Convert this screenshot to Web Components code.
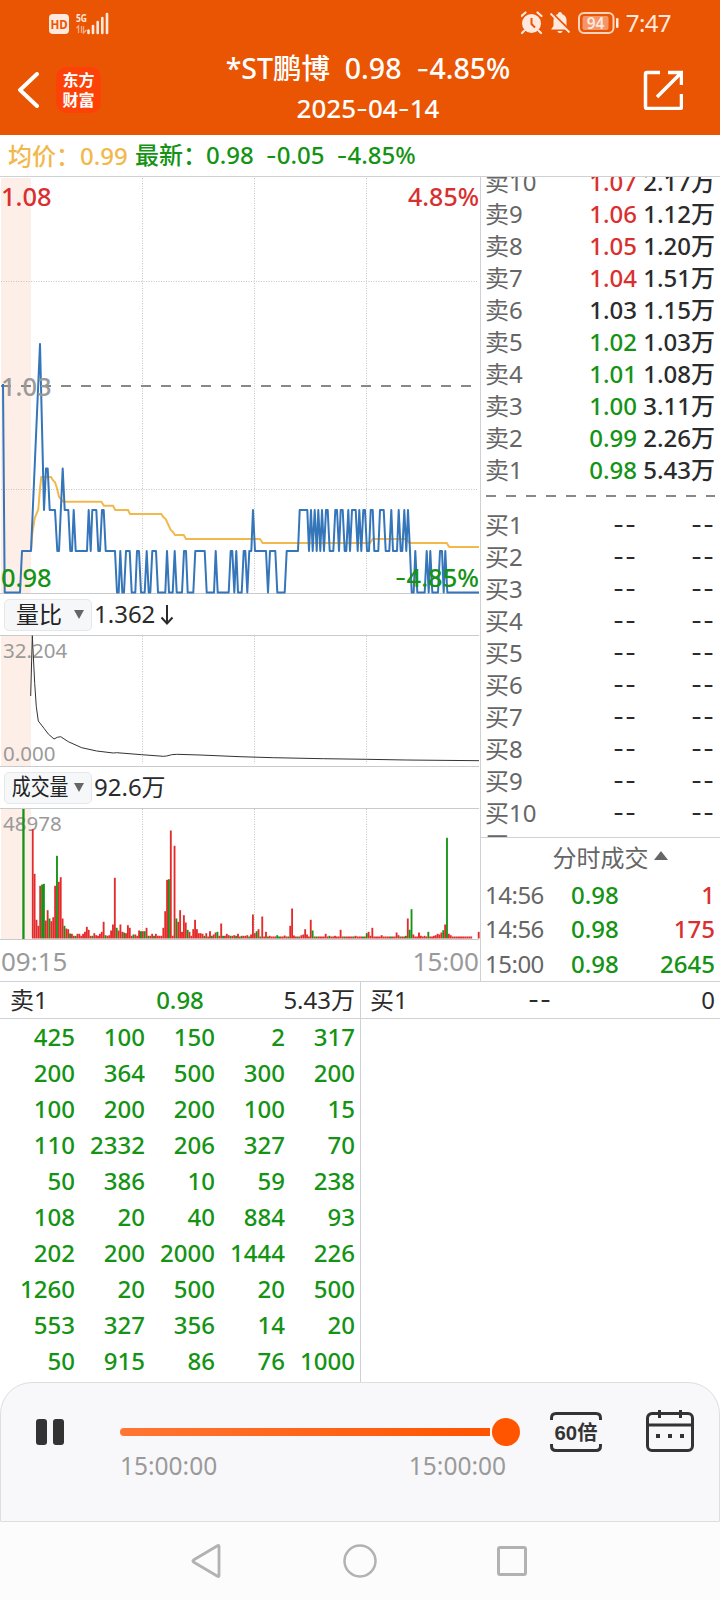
<!DOCTYPE html>
<html lang="zh-CN">
<head>
<meta charset="utf-8">
<title>*ST鹏博 分时回放</title>
<style>
  body {
    margin: 0;
    width: 720px;
    height: 1600px;
    overflow: hidden;
    background: #fff;
    color: #2b2b2b;
    font: 24px/32px "Noto Sans", "Noto Sans CJK SC", sans-serif;
    --up: #d9302f;
    --down: #149314;
    --avg: #f2b84c;
    --line: #cfd1d4;
    --muted: #9a9a9a;
    --label: #666;
  }
  main { display: flex; height: 804px; }
  .charts { width: 480px; display: flex; flex-direction: column; border-right: 1px solid var(--line); }
  .side { flex: 1; min-width: 0; display: flex; flex-direction: column; }
  .queues { display: flex; height: 400px; border-top: 1px solid var(--line); }
</style>
</head>
<body>
  <app-header name="*ST鹏博" price="0.98" change="-4.85%" date="2025-04-14"></app-header>
  <quote-strip></quote-strip>
  <main>
    <div class="charts">
      <price-chart></price-chart>
      <indicator-row wide>量比<span slot="value">1.362<svg width="14" height="22" viewBox="0 0 14 22" style="margin-left:5px;vertical-align:-3px"><path d="M7 1v18M1.500 13.500 7 19.500l5.500-6" fill="none" stroke="#2b2b2b" stroke-width="2"/></svg></span></indicator-row>
      <ratio-chart></ratio-chart>
      <indicator-row>成交量<span slot="value">92.6万</span></indicator-row>
      <volume-chart></volume-chart>
      <time-axis><span>09:15</span><span>15:00</span></time-axis>
    </div>
    <div class="side">
      <order-book></order-book>
      <trade-list></trade-list>
    </div>
  </main>
  <div class="queues">
    <order-queue side="卖1" price="0.98" total="5.43万"></order-queue>
    <order-queue side="买1" price="--" total="0"></order-queue>
  </div>
  <replay-bar from="15:00:00" to="15:00:00" speed="60倍"></replay-bar>
  <system-nav></system-nav>

<script>
// Small base: every element renders once from its html getter.
class BaseElement extends HTMLElement {
  constructor() {
    super();
    this.attachShadow({ mode: "open" });
  }

  connectedCallback() {
    const template = document.createElement("template");
    template.innerHTML = this.html;
    this.shadowRoot.replaceChildren(template.content.cloneNode(true));
  }
}

// Noto's hyphen is too short for a minus sign, Inter's is wide enough.
const wideDash = (text) => text.replace(/-/g, `<span style="font-family:Inter,sans-serif;font-weight:400">-</span>`);

const GRID_X = [142.5, 254.5, 366.5];

function gridLines(height) {
  return GRID_X.map((x) => `<path class="grid" d="M${x} 1V${height - 3}"/>`).join("");
}

const chartStyle = `
  :host { display: block; width: 480px; flex: none; }
  svg { display: block; }
  .pre { fill: #fdeee8; }
  .grid { stroke: #c4c4c4; stroke-width: 1; stroke-dasharray: 1 1.5; fill: none; }
  .edge { stroke: #c9cacc; stroke-width: 1; }
  text { fill: var(--muted); }
`;

class AppHeader extends BaseElement {
  get html() {
    const attr = (n) => this.getAttribute(n);
    return `
      <style>
        :host { display: flex; flex-direction: column; height: 135px; background: #ea5504; color: #fff; }
        .status { display: flex; align-items: center; height: 46px; padding: 0 49px; color: #ffe9df; }
        .status svg { flex: none; margin-top: -1px; }
        .clock { margin-left: 7px; font: 24px/30px "Noto Sans", sans-serif; letter-spacing: -.6px; }
        .bar { display: flex; align-items: flex-start; height: 89px; }
        .back { margin: 26px 0 0 17px; }
        .logo { margin: 21px 0 0 17px; width: 45px; height: 46px; box-sizing: border-box; padding-top: 2px;
          border-radius: 10px; background: #fd4208; text-align: center;
          font: 700 16px/20px "Noto Sans CJK SC", sans-serif; }
        .title { width: 534px; display: flex; flex-direction: column; align-items: center; }
        .title b { flex: none; font-weight: 500; font-size: 28.500px; line-height: 44px; white-space: pre; }
        .date { font-weight: 500; font-size: 26px; line-height: 34px; }
        .share { margin: 24px 0 0 8px; }
      </style>
      <div class="status">
        <svg width="60" height="24" viewBox="0 0 60 24">
          <rect y="3" width="20" height="20" rx="4" fill="#ffe9df"/>
          <text x="10" y="17.500" font-size="11.500" font-weight="700" text-anchor="middle" fill="#ea5504" font-family="Noto Sans">HD</text>
          <text x="27" y="11" font-size="11" font-weight="700" fill="#ffe9df" font-family="Noto Sans" textLength="11" lengthAdjust="spacingAndGlyphs">5G</text>
          <path d="M27.500 17l2-2v7M32.500 15v7M34.500 15v7l3-3" fill="none" stroke="#f7ab85" stroke-width="1.300"/>
          <path d="M39.500 19.500V22M44 15v7M48.700 11v11M53.300 7v15M58 3v19" stroke="#ffe9df" stroke-width="2.600" stroke-linecap="round"/>
        </svg>
        <svg style="margin-left:auto" width="98" height="24" viewBox="0 0 98 24">
          <g fill="#ffe9df">
            <circle cx="10.500" cy="12.500" r="9.500"/>
            <path d="M3 20l-2 2M18 20l2 2M.5 5 4.500 1.500M20.500 5l-4-3.500" stroke="#ffe9df" stroke-width="2.200" stroke-linecap="round"/>
            <path d="M10.500 7v6l3.500 3.500" fill="none" stroke="#ea5504" stroke-width="2"/>
            <path d="M39 1c1.200 0 2 .8 2 2 3 1 4.500 3.500 4.500 6.500V15l2.500 3.500H30L32.500 15V9.500C32.500 6 34.500 3.800 37 3c0-1.200.8-2 2-2zM36.500 20h5c-.3 1.500-1.300 2-2.500 2s-2.200-.5-2.500-2z"/>
            <path d="M31 2.500 50 21" stroke="#ea5504" stroke-width="3"/>
            <path d="M29.500 2.500 48.500 21.500" stroke="#ffe9df" stroke-width="1.800"/>
            <rect x="58" y="2" width="34.500" height="20" rx="5" fill="none" stroke="#ffd3be" stroke-width="2"/>
            <rect x="61.500" y="5" width="26" height="14" rx="2" fill="#f49668"/>
            <rect x="95" y="7" width="2.500" height="10" rx="1"/>
            <text x="74.500" y="17.500" font-size="15.500" font-weight="600" text-anchor="middle" font-family="Noto Sans">94</text>
          </g>
        </svg>
        <span class="clock">7:47</span>
      </div>
      <div class="bar">
        <svg class="back" width="22" height="36" viewBox="0 0 22 36"><path d="M20 2 3 18l17 16" fill="none" stroke="#fff" stroke-width="4" stroke-linecap="round" stroke-linejoin="round"/></svg>
        <div class="logo">东方<br>财富</div>
        <div class="title"><b>${wideDash(`${attr("name")}  ${attr("price")}  ${attr("change")}`)}</b><div class="date">${wideDash(attr("date"))}</div></div>
        <svg class="share" width="40" height="40" viewBox="0 0 40 40"><path d="M17 2.500H4q-1.500 0-1.500 1.500v33q0 1.500 1.500 1.500h33q1.500 0 1.500-1.500V24M25 2.500h13.500V15M38 3 14 27" fill="none" stroke="#fff" stroke-width="3.500"/></svg>
      </div>`;
  }
}

class QuoteStrip extends BaseElement {
  get html() {
    return `
      <style>
        :host { display: flex; align-items: center; height: 41px; padding-left: 8px; border-bottom: 1px solid var(--line);
          color: var(--down); white-space: pre; font-weight: 500; }
        .avg { width: 127px; color: var(--avg); }
        .avg, .last { display: flex; }
        .k { width: 72px; }
        .last .k { width: 71px; }
        .delta { margin-left: 12px; }
      </style>
      <div class="avg"><span class="k">均价：</span>0.99</div>
      <div class="last"><span class="k">最新：</span>0.98<span class="delta">${wideDash("-0.05")}</span><span class="delta">${wideDash("-4.85%")}</span></div>`;
  }
}

// Pixel heights of the price levels 0.98, 0.99, 1.00, 1.01, the previous close and the spike.
const LEVELS = { a: 415.5, b: 374, c: 333, d: 291.500, e: 207, f: 167 };

// Third-of-a-pixel x positions, each followed by its level.
const PRICE =
  "9e14a60a66b93b120f132c138d143d149c165c172b177b188d194c205c211b216b221c227b261b266c272b277c289c295b300b306c311c317b" +
  "345b351a356a361b367a372a378b389b395a406a411b417b423a434a440b446a451a457b468b474a496a501b507a518a524b530a546a552b" +
  "558b563a580a586b614b620a642a647b653a686a692b697b703a709b714a725a731b736b742a748b754b759c765b798b804a810b826b832a" +
  "854a860b894b899c922c927b933c938b944c950b955c961b966c972b978c983c989b1000b1006c1011c1017b1022c1028c1034b1039b1045c" +
  "1050b1056c1067c1073b1078c1084b1090c1095c1101b1107b1112c1118c1123b1135b1140c1151c1157b1168b1174c1179b1191b1196c" +
  "1202b1207b1213c1219b1224c1230b1235a1241a1246b1252a1274a1280b1286a1291b1297a1314a1320b1326b1331a1336b1342a1437a";

const AVERAGE = [
  [93, 1122], [97, 1069], [104, 1024], [115, 997], [120, 934], [124, 900], [153, 900], [158, 909], [165, 916],
  [171, 934], [177, 959], [190, 974], [304, 974], [312, 986], [339, 986], [346, 999], [384, 999], [390, 1011],
  [484, 1011], [490, 1020], [497, 1026], [512, 1059], [518, 1064], [525, 1074], [551, 1074], [558, 1086],
  [780, 1086], [788, 1098], [1110, 1098], [1118, 1086], [1220, 1086], [1228, 1098], [1340, 1098], [1348, 1110], [1437, 1110],
];

const toPoints = (list) => list.map(([x, y]) => `${(x / 3).toFixed(1)},${(y / 3).toFixed(1)}`).join(" ");

class PriceChart extends BaseElement {
  get html() {
    const price = [...PRICE.matchAll(/(\d+)([a-f])/g)].map(([, x, l]) => `${(x / 3).toFixed(1)},${LEVELS[l]}`).join(" ");
    return `
      <style>${chartStyle}
        text { font-size: 25.500px; font-weight: 500; }
        .price { fill: none; stroke: #3575b9; stroke-width: 2; stroke-linejoin: round; }
        .mean { fill: none; stroke: var(--avg); stroke-width: 2; }
      </style>
      <svg width="480" height="417" viewBox="0 0 480 417">
        <rect class="pre" x="1" y="1" width="30" height="415"/>
        ${gridLines(417)}
        <path class="grid" d="M1 104.500H478M1 312.500H478"/>
        <path d="M1 209H478" stroke="#888" stroke-width="2" stroke-dasharray="10 10"/>
        <path class="edge" d="M0 416.500H479"/>
        <polyline class="mean" points="${toPoints(AVERAGE)}"/>
        <polyline class="price" points="${price}"/>
        <text x="1" y="28.500" style="fill:var(--up)">1.08</text>
        <text x="1" y="218.500">1.03</text>
        <text x="1" y="409.500" style="fill:var(--down)">0.98</text>
        <text x="479" y="28.500" text-anchor="end" style="fill:var(--up)" textLength="71" lengthAdjust="spacingAndGlyphs">4.85%</text>
        <text x="479" y="409.500" text-anchor="end" style="fill:var(--down)"><tspan font-family="Inter" font-weight="400">-</tspan>4.85%</text>
      </svg>`;
  }
}

class IndicatorRow extends BaseElement {
  get html() {
    return `
      <style>
        :host { display: flex; align-items: center; height: 41px; flex: none; font-size: 24px; }
        .chip { display: flex; align-items: center; justify-content: flex-end; box-sizing: border-box; width: 88px; height: 32px;
          margin: 0 2px 0 4px; padding-right: 7px; border: 1px solid #e6e7ea; border-radius: 5px; background: #f6f7f9;
          color: #222; font-size: 22.500px; }
        .name { transform: scaleX(.84); transform-origin: right; white-space: nowrap; margin: -2px 5px 0 -20px; }
        :host([wide]) .name { transform: none; margin: -2px 12px 0 0; font-size: 23px; }
        .value { margin-top: -2px; }
      </style>
      <div class="chip">
        <span class="name"><slot></slot></span>
        <svg width="10" height="9" viewBox="0 0 10 9"><path d="M0 0h10L5 9z" fill="#666"/></svg>
      </div>
      <div class="value"><slot name="value"></slot></div>`;
  }
}

const RATIO = [
  [92, 183], [97, 2], [104, 145], [109, 215], [115, 258], [132, 280], [145, 297], [162, 312], [172, 307], [182, 305],
  [205, 320], [245, 338], [290, 348], [340, 354], [350, 353], [425, 359], [490, 364], [500, 363], [515, 359],
  [530, 358], [600, 360], [720, 365], [820, 368], [970, 371], [1100, 373], [1220, 375], [1437, 377],
];

class RatioChart extends BaseElement {
  get html() {
    return `
      <style>${chartStyle} text { font-size: 20.500px; }</style>
      <svg width="480" height="132" viewBox="0 0 480 132">
        <rect class="pre" x="1" y="1" width="30" height="130"/>
        ${gridLines(132)}
        <path class="edge" d="M0 .5H479M0 131.500H479"/>
        <text x="3" y="22.500">32.204</text>
        <text x="3" y="125.500">0.000</text>
        <polyline points="${toPoints(RATIO)}" fill="none" stroke="#333" stroke-width="1"/>
      </svg>`;
  }
}

// One entry per minute in thirds of a pixel, "g" marks a falling minute.
const VOLUME = (
  "328 194 56 38 158 162g 164g 54 85 60g 52 64 158 248g 170 184 60 38g 30 28 15g 14 8 8g 14 14 8 14 20 35 26 8 8g 16 10 8 14 20 50 10g " +
  "8 10 24 42 182 32g 24 42 20 18g 16 40 32 8 12g 12 8 24 22g 22 22g 32 8g 8 14 8g 14 8 8 8 32 82 176 178g 324 8 278 60g 50 85 " +
  "20 70 48 26g 20 8 28 56 28 16 16 14 8g 16 6 22 8g 12 18 20g 8 45 8g 8 14 10 8g 8 10 8g 14 6 8g 8 8 10 6g 12 72 16 22g 28"
).split(" ");
const PEAKS = {
  123: "66", 125: "20", 126: "6g", 127: "8", 131: "10g", 135: "9", 138: "38", 139: "90", 140: "9", 144: "10", 145: "12", 146: "28",
  147: "12", 149: "56", 150: "24g", 157: "14", 159: "8g", 162: "8", 165: "26", 173: "8", 179: "16g", 180: "20", 181: "8", 182: "32",
  187: "10", 195: "18", 196: "10", 200: "8g", 201: "60", 202: "26g", 203: "88g", 204: "12", 207: "18", 208: "8", 210: "8",
  212: "20g", 215: "8", 216: "10", 217: "14", 218: "12", 219: "18", 220: "25g", 221: "42", 222: "302g", 223: "14", 224: "10", 239: "20",
};

class VolumeChart extends BaseElement {
  get html() {
    let bars = `<rect x="22.300" y="1" width="2.300" height="130" fill="#149314"/>`;
    for (let i = 0; i < 240; i++) {
      if (i > 235 && i < 239) continue;
      const v = VOLUME[i] || PEAKS[i] || (i % 5 === 2 && i < 200 ? "6g" : "6");
      const h = parseInt(v, 10) / 3;
      const x = 31.800 + i * 1.866;
      bars += `<rect x="${x.toFixed(2)}" y="${(130.500 - h).toFixed(1)}" width="1.850" height="${h.toFixed(1)}" fill="${v.endsWith("g") ? "#149314" : "#e32b2b"}"/>`;
    }
    return `
      <style>${chartStyle} text { font-size: 20.500px; }</style>
      <svg width="480" height="132" viewBox="0 0 480 132">
        <rect class="pre" x="1" y="1" width="30" height="130"/>
        ${gridLines(132)}
        <path class="edge" d="M0 .5H479M0 131.500H479"/>
        <text x="3" y="22.500">48978</text>
        ${bars}
      </svg>`;
  }
}

class TimeAxis extends BaseElement {
  get html() {
    return `
      <style>
        :host { display: flex; justify-content: space-between; align-items: center; flex: 1; padding: 0 1px; color: var(--muted); font-size: 26px; }
      </style>
      <slot></slot>`;
  }
}

const ASKS = [
  ["卖10", "1.07", "2.17万"], ["卖9", "1.06", "1.12万"], ["卖8", "1.05", "1.20万"], ["卖7", "1.04", "1.51万"], ["卖6", "1.03", "1.15万"],
  ["卖5", "1.02", "1.03万"], ["卖4", "1.01", "1.08万"], ["卖3", "1.00", "3.11万"], ["卖2", "0.99", "2.26万"], ["卖1", "0.98", "5.43万"],
];
const PREV_CLOSE = 1.03;

function tone(price) {
  if (price > PREV_CLOSE) return "up";
  return price < PREV_CLOSE ? "down" : "";
}

class OrderBook extends BaseElement {
  get html() {
    const row = ([label, price, size]) => `
      <div class="row ${price === "--" ? "empty" : ""}">
        <span class="label">${label}</span><span class="price ${tone(Number(price))}">${price}</span><span class="size">${size}</span>
      </div>`;
    const bids = Array.from({ length: 11 }, (_, i) => ["买" + (i + 1), "--", "--"]);
    return `
      <style>
        :host { display: flex; flex-direction: column; height: 662px; overflow: hidden; padding: 0 5px 0 4px; border-bottom: 1px solid var(--line); }
        .asks { margin-top: -11px; }
        .row { display: grid; grid-template-columns: 71px 81px 78px; height: 32px; line-height: 32px; white-space: nowrap; font-weight: 500; }
        .label { color: var(--label); font-weight: 400; }
        .price, .size { text-align: right; }
        .empty .price, .empty .size { font-family: Inter, sans-serif; font-weight: 400; letter-spacing: 1px; }
        .up { color: var(--up); }
        .down { color: var(--down); }
        .mid { flex: none; height: 2px; margin: 9px 0 12px 1px; background: repeating-linear-gradient(90deg, #888 0 10px, transparent 10px 20px); }
      </style>
      <div class="asks">${ASKS.map(row).join("")}</div>
      <div class="mid"></div>
      <div>${bids.map(row).join("")}</div>`;
  }
}

class TradeList extends BaseElement {
  get html() {
    const trades = [["14:56", "0.98", "1", "up"], ["14:56", "0.98", "175", "up"], ["15:00", "0.98", "2645", "down"]];
    return `
      <style>
        :host { display: block; padding: 0 5px 0 4px; }
        .head { display: flex; align-items: center; justify-content: center; height: 40px; padding-left: 20px; color: var(--label); }
        .head svg { margin: -4px 0 0 5px; }
        .row { display: grid; grid-template-columns: 86px 60px 1fr; line-height: 34.500px; font-weight: 500; }
        .time { color: var(--label); font-weight: 400; letter-spacing: -.5px; }
        .vol { text-align: right; }
        .up { color: var(--up); }
        .down { color: var(--down); }
      </style>
      <div class="head">分时成交<svg width="14" height="9" viewBox="0 0 14 9"><path d="M7 0l7 9H0z" fill="#666"/></svg></div>
      ${trades.map(([t, p, v, c]) => `<div class="row"><span class="time">${t}</span><span class="down">${p}</span><span class="vol ${c}">${v}</span></div>`).join("")}`;
  }
}

const SELL_QUEUE = [
  425, 100, 150, 2, 317, 200, 364, 500, 300, 200, 100, 200, 200, 100, 15, 110, 2332, 206, 327, 70, 50, 386, 10, 59, 238,
  108, 20, 40, 884, 93, 202, 200, 2000, 1444, 226, 1260, 20, 500, 20, 500, 553, 327, 356, 14, 20, 50, 915, 86, 76, 1000,
];

class OrderQueue extends BaseElement {
  get html() {
    const price = this.getAttribute("price");
    const empty = price === "--";
    return `
      <style>
        :host { display: block; width: 359px; flex: 1; border-left: 1px solid var(--line); box-sizing: border-box; }
        :host(:first-child) { border-left: 0; flex: 0 0 360px; width: 360px; }
        .head { display: grid; grid-template-columns: 1fr 1fr 1fr; align-items: center; height: 36px; padding: 0 5px 0 ${empty ? 9 : 10}px; border-bottom: 1px solid var(--line); }
        .price { text-align: center; color: var(--down); font-weight: 500; margin-right: 5px; }
        .empty { color: inherit; font-family: Inter, sans-serif; font-weight: 400; letter-spacing: 1px; }
        .total { text-align: right; }
        .grid { display: grid; grid-template-columns: 75px repeat(4, 70px); grid-auto-rows: 36px; line-height: 36px; text-align: right;
          color: var(--down); font-weight: 500; }
      </style>
      <div class="head"><span>${this.getAttribute("side")}</span><span class="price ${empty ? "empty" : ""}">${price}</span><span class="total">${this.getAttribute("total")}</span></div>
      <div class="grid">${empty ? "" : SELL_QUEUE.map((n) => `<span>${n}</span>`).join("")}</div>`;
  }
}

class ReplayBar extends BaseElement {
  get html() {
    const attr = (n) => this.getAttribute(n);
    return `
      <style>
        :host { display: flex; align-items: flex-start; box-sizing: border-box; height: 140px;
          border: 1px solid #dedee0; border-radius: 32px 32px 0 0; background: #f8f8fa; color: var(--muted); }
        .pause { margin: 36px 0 0 35px; }
        .slider { width: 401px; margin: 35px 0 0 56px; }
        .slider svg { display: block; }
        .times { display: flex; justify-content: space-between; width: 386px; box-sizing: border-box; font-size: 24.500px; margin-top: 2px; }
        .speed { margin: 29px 0 0 29px; width: 52px; }
        .cal { margin: 27px 0 0 44px; }
      </style>
      <svg class="pause" width="28" height="26" viewBox="0 0 28 26"><rect width="11" height="26" rx="3" fill="#333"/><rect x="17" width="11" height="26" rx="3" fill="#333"/></svg>
      <div class="slider">
        <svg width="402" height="30" viewBox="0 0 402 30">
          <defs><linearGradient id="track" gradientUnits="userSpaceOnUse" x1="0" x2="370" y1="0" y2="0"><stop stop-color="#ff7633"/><stop offset="1" stop-color="#ff5400"/></linearGradient></defs>
          <path d="M370 10H4a4 4 0 0 0 0 8h366z" fill="url(#track)"/>
          <circle cx="386" cy="14" r="15" fill="#fff4ec"/>
          <circle cx="386" cy="14" r="14" fill="#ff5400"/>
        </svg>
        <div class="times"><span>${attr("from")}</span><span>${attr("to")}</span></div>
      </div>
      <svg class="speed" width="52" height="40" viewBox="0 0 52 40">
        <path d="M1.500 8V6q0-4.500 4.500-4.500h40q4.500 0 4.500 4.500v2M1.500 32v2q0 4.500 4.500 4.500h40q4.500 0 4.500-4.500v-2" fill="none" stroke="#333" stroke-width="3"/>
        <text x="26" y="28" text-anchor="middle" font-size="20" font-weight="700" fill="#333" textLength="43" lengthAdjust="spacingAndGlyphs" font-family="Liberation Sans, Noto Sans CJK SC, sans-serif">${attr("speed")}</text>
      </svg>
      <svg class="cal" width="48" height="42" viewBox="0 0 48 42">
        <rect x="1.500" y="3.500" width="45" height="37" rx="4.500" fill="none" stroke="#333" stroke-width="3"/>
        <path d="M2 15h44M13.500 0v8M34.500 0v8" stroke="#333" stroke-width="3"/>
        <path d="M10 26h4M22 26h4M34 26h4" stroke="#333" stroke-width="4"/>
      </svg>`;
  }
}

class SystemNav extends BaseElement {
  get html() {
    return `
      <style>
        :host { display: flex; justify-content: center; align-items: center; height: 78px; gap: 119px; background: #fcfcfc; }
      </style>
      <svg width="34" height="36" viewBox="0 0 34 36"><path d="M30 3.500v29q0 1.500-1.500.8L4.500 19q-1.300-1 0-2l24-14.300q1.500-.8 1.500.8z" fill="none" stroke="#b2b2b2" stroke-width="2.800"/></svg>
      <svg width="36" height="36" viewBox="0 0 36 36"><circle cx="18" cy="18" r="15.500" fill="none" stroke="#b2b2b2" stroke-width="2.500"/></svg>
      <svg width="34" height="36" viewBox="0 0 34 36"><rect x="1.500" y="4.500" width="27" height="27" rx="1.500" fill="none" stroke="#b2b2b2" stroke-width="3"/></svg>`;
  }
}

customElements.define("app-header", AppHeader);
customElements.define("quote-strip", QuoteStrip);
customElements.define("price-chart", PriceChart);
customElements.define("indicator-row", IndicatorRow);
customElements.define("ratio-chart", RatioChart);
customElements.define("volume-chart", VolumeChart);
customElements.define("time-axis", TimeAxis);
customElements.define("order-book", OrderBook);
customElements.define("trade-list", TradeList);
customElements.define("order-queue", OrderQueue);
customElements.define("replay-bar", ReplayBar);
customElements.define("system-nav", SystemNav);
</script>
</body>
</html>
